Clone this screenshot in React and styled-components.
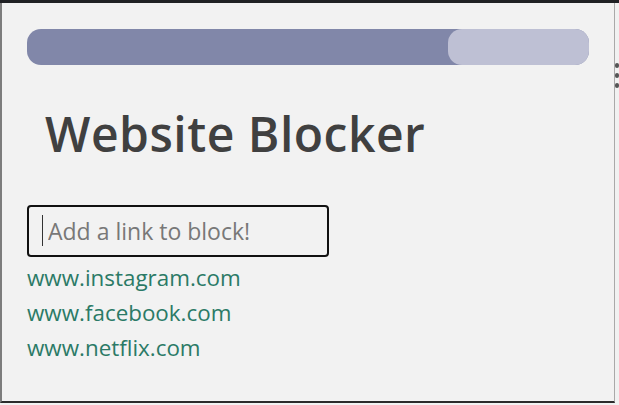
import React from "react"
import styled, { createGlobalStyle } from "styled-components"

const Global = createGlobalStyle`
  html, body {
    margin: 0;
    padding: 0;
    background: #f1f1f1;
    overflow: hidden;
  }
  * {
    box-sizing: border-box;
  }
`

const Screen = styled.div`
  width: 619px;
  height: 405px;
  display: flex;
  flex-direction: column;
  background: #f1f1f1;
  font-family: "Open Sans", "Noto Sans", sans-serif;
`

const TopBar = styled.div`
  height: 3px;
  background: #202124;
  flex-shrink: 0;
`

const Row = styled.div`
  flex: 1;
  display: flex;
`

const Popup = styled.div`
  width: 616px;
  height: 400px;
  background: #f2f2f2;
  border-left: 2px solid #7d7d7d;
  border-right: 1px solid #a9a9a9;
  border-bottom: 2px solid #2b2b2b;
  padding: 26px 25px 0 25px;
  display: flex;
  flex-direction: column;
`

const Side = styled.div`
  flex: 1;
  display: flex;
  flex-direction: column;
  align-items: flex-end;
  padding-top: 60px;
  gap: 5px;
`

const Dot = styled.span`
  width: 4px;
  height: 5px;
  border-radius: 2px;
  background: #555;
`

const Track = styled.div`
  height: 36px;
  border-radius: 14px;
  background: #8187a9;
  display: flex;
  justify-content: flex-end;
`

const Remaining = styled.div`
  width: ${(p) => p.$width}px;
  border-radius: 14px;
  background: #bec0d4;
`

const Title = styled.h1`
  margin: 45px 0 0 0;
  padding-left: 18px;
  font-size: 48px;
  line-height: 1;
  font-weight: 600;
  color: #404040;
  letter-spacing: 0.5px;
`

const Field = styled.div`
  position: relative;
  margin-top: 47px;
  width: 302px;
`

const Input = styled.input`
  width: 302px;
  height: 52px;
  border: 2px solid #111;
  border-radius: 4px;
  background: transparent;
  padding: 0 0 0 19px;
  font-family: "Open Sans", "Noto Sans", sans-serif;
  font-size: 23px;
  color: #333;
  outline: none;
  &::placeholder {
    color: #787878;
  }
`

const Caret = styled.span`
  position: absolute;
  left: 15px;
  top: 10px;
  width: 1px;
  height: 31px;
  background: #333;
`

const Links = styled.ul`
  list-style: none;
  margin: 3px 0 0 0;
  padding: 0;
`

const Link = styled.li`
  font-size: 22.4px;
  line-height: 35px;
  color: #2b7a66;
`

const sites = ["www.instagram.com", "www.facebook.com", "www.netflix.com"]

const App = () => (
  <Screen>
    <Global />
    <TopBar />
    <Row>
      <Popup>
        <Track>
          <Remaining $width={141} />
        </Track>
        <Title>Website Blocker</Title>
        <Field>
          <Input placeholder="Add a link to block!" />
          <Caret />
        </Field>
        <Links>
          {sites.map((s) => (
            <Link key={s}>{s}</Link>
          ))}
        </Links>
      </Popup>
      <Side>
        <Dot />
        <Dot />
        <Dot />
      </Side>
    </Row>
  </Screen>
)

export default App
